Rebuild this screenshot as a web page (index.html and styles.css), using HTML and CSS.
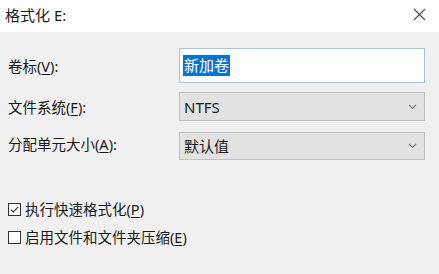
FILE: index.html
```html
<!DOCTYPE html>
<html lang="zh-CN">
<head>
<meta charset="utf-8">
<title>格式化 E:</title>
<link rel="stylesheet" href="styles.css">
</head>
<body>
<div class="dialog">
  <div class="titlebar">
    <span class="title">格式化 E:</span>
    <svg class="close" width="13" height="13" viewBox="0 0 13 13"><path d="M1 1 L12 12 M12 1 L1 12" stroke="#4a4a4a" stroke-width="1.1" fill="none"/></svg>
  </div>
  <div class="content">
    <div class="form">
      <label class="label">卷标(<u>V</u>):</label>
      <div class="input"><span class="sel">新加卷</span></div>
      <label class="label">文件系统(<u>F</u>):</label>
      <div class="select"><span>NTFS</span><svg width="9" height="6" viewBox="0 0 9 6"><path d="M1 1 L4.5 4.5 L8 1" stroke="#7a7a7a" stroke-width="1.1" fill="none"/></svg></div>
      <label class="label">分配单元大小(<u>A</u>):</label>
      <div class="select s3"><span>默认值</span><svg width="9" height="6" viewBox="0 0 9 6"><path d="M1 1 L4.5 4.5 L8 1" stroke="#7a7a7a" stroke-width="1.1" fill="none"/></svg></div>
    </div>
    <div class="checks">
      <div class="check"><svg class="box" width="13" height="13" viewBox="0 0 13 13"><rect x="0.5" y="0.5" width="12" height="12" fill="#fff" stroke="#333" stroke-width="1"/><path d="M2.8 6.6 L5.3 9 L10.2 3.8" stroke="#333" stroke-width="1.1" fill="none"/></svg><span>执行快速格式化(<u>P</u>)</span></div>
      <div class="check"><svg class="box" width="13" height="13" viewBox="0 0 13 13"><rect x="0.5" y="0.5" width="12" height="12" fill="#fff" stroke="#333" stroke-width="1"/></svg><span>启用文件和文件夹压缩(<u>E</u>)</span></div>
    </div>
  </div>
</div>
</body>
</html>
```
FILE: styles.css
```css
html, body {
  margin: 0;
  padding: 0;
}
body {
  width: 439px;
  height: 274px;
  overflow: hidden;
  background: #f0f0f0;
  font-family: "Noto Sans", "Noto Sans CJK SC", sans-serif;
  font-size: 14.5px;
  color: #1a1a1a;
}
.dialog {
  display: flex;
  flex-direction: column;
  height: 274px;
}
.titlebar {
  height: 32px;
  background: #fff;
  display: flex;
  align-items: center;
  justify-content: space-between;
  padding: 0 13px 0 5px;
}
.title {
  font-size: 15px;
  line-height: 20px;
  margin-top: -2px;
}
.close {
  margin-top: -3px;
}
.content {
  padding: 16px 14px 0 8px;
}
.form {
  display: grid;
  grid-template-columns: 171px 246px;
  grid-template-rows: 35px 29px 28px;
  row-gap: 9px;
  align-items: center;
}
.label {
  line-height: 20px;
}
.label u, .check u {
  text-decoration-thickness: 1px;
  text-underline-offset: 2px;
}
.input {
  height: 35px;
  box-sizing: border-box;
  background: #fff;
  border: 1px solid #9cc6ec;
  display: flex;
  align-items: center;
  padding-left: 3px;
}
.sel {
  background: #0a74d0;
  color: #fff;
  line-height: 21px;
  padding: 0 1px;
  font-size: 15px;
}
.select {
  height: 29px;
  box-sizing: border-box;
  background: #e2e2e2;
  border: 1px solid #bfbfbf;
  display: flex;
  align-items: center;
  justify-content: space-between;
  padding: 0 7px 0 4px;
  line-height: 20px;
  font-size: 15px;
}
.s3 {
  height: 28px;
  margin-top: 3px;
}
.checks {
  display: flex;
  flex-direction: column;
  padding-top: 41px;
  gap: 8px;
}
.check {
  display: flex;
  align-items: center;
  gap: 4px;
  line-height: 20px;
}
.box {
  flex: none;
}
```
